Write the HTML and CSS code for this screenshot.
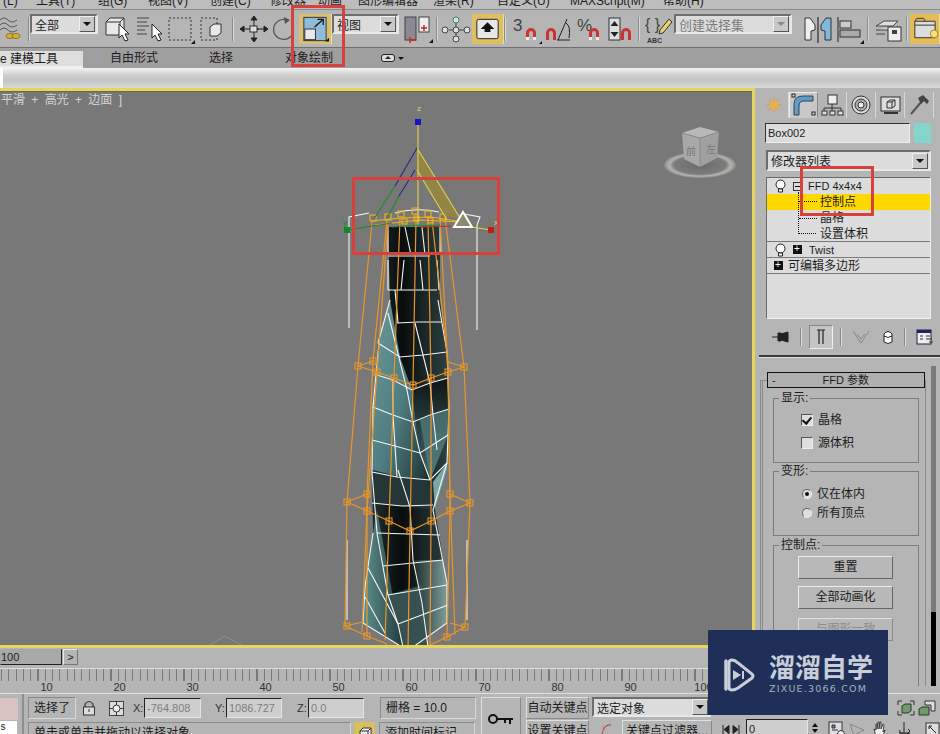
FILE: index.html
```html
<!DOCTYPE html>
<html lang="zh">
<head>
<meta charset="utf-8">
<title>3ds Max</title>
<link rel="stylesheet" href="styles.css">
</head>
<body>
<div class="app">
  <div class="menu">
    <span class="m1">(L)</span><span class="m2">工具(T)</span><span class="m3">组(G)</span><span class="m4">视图(V)</span><span class="m5">创建(C)</span><span class="m6">修改器</span><span class="m7">动画</span><span class="m8">图形编辑器</span><span class="m9">渲染(R)</span><span class="m10">自定义(U)</span><span class="m11">MAXScript(M)</span><span class="m12">帮助(H)</span>
  </div>

  <div class="toolbar">
    <svg class="ic" width="28" height="30" viewBox="0 0 28 30"><g fill="none" stroke="#555" stroke-width="1"><path d="M0 6q4-4 8 0t9 0"/><path d="M0 11q4-4 8 0t9 0"/><path d="M0 16q4-4 8 0t9 0"/></g><g fill="#d8b030" stroke="#7a5a10" stroke-width=".7"><ellipse cx="10" cy="22" rx="4" ry="2.5"/><ellipse cx="16" cy="22" rx="4" ry="2.5"/></g></svg>
    <i class="sep"></i>
    <div class="combo c-all"><span>全部</span><b class="arrow"></b></div>
    <svg class="ic" width="33" height="30" viewBox="0 0 33 30"><path d="M5 8l4-4h14v14l-4 3H5z" fill="#e8e8e8" stroke="#333"/><path d="M5 8h14v13M19 8l4-4" fill="none" stroke="#333"/><path d="M18 10v14l3-3 3 6 3-1-3-6h4z" fill="#fff" stroke="#222"/></svg>
    <svg class="ic" width="32" height="30" viewBox="0 0 32 30"><path d="M3 4h12M3 8h10M3 12h12M3 16h8M3 20h10" stroke="#444" fill="none"/><path d="M18 10v14l3-3 3 6 3-1-3-6h4z" fill="#fff" stroke="#222"/></svg>
    <svg class="ic" width="32" height="30" viewBox="0 0 32 30"><rect x="3" y="4" width="22" height="22" fill="none" stroke="#333" stroke-dasharray="2 2"/><path d="M25 30l4-4v4z" fill="#111"/></svg>
    <svg class="ic" width="31" height="30" viewBox="0 0 31 30"><rect x="3" y="4" width="16" height="22" fill="none" stroke="#333" stroke-dasharray="2 2"/><path d="M12 13l4-3h7v9l-4 3h-7z" fill="#e8e8e8" stroke="#333"/></svg>
    <i class="sep sep-c"></i>
    <svg class="ic" width="33" height="30" viewBox="0 0 33 30"><path d="M14 15h8v-0M14 6l3-4 3 4zM14 24l3 4 3-4zM7 12l-4 3 4 3zM27 12l4 3-4 3z" fill="#222" stroke="#222"/><rect x="13" y="12" width="7" height="6" fill="#ddd" stroke="#333"/><path d="M17 6v6M17 18v6M7 15h6M20 15h7" stroke="#222"/></svg>
    <svg class="ic" width="29" height="30" viewBox="0 0 29 30"><path d="M17 6a10 10 0 1 0 6 6" fill="none" stroke="#555" stroke-width="1.2"/><path d="M14 3l6 3-5 4z" fill="#555"/></svg>
    <div class="active-btn"><svg width="33" height="30" viewBox="0 0 33 30"><rect x="5" y="3" width="23" height="24" fill="#8fbcd8" stroke="#333"/><rect x="6" y="15" width="11" height="11" fill="#e8e8e8" stroke="#333"/><path d="M16 13l8-7M19 5h6v6" fill="none" stroke="#111" stroke-width="1.3"/><path d="M27 28l4-4v4z" fill="#111"/></svg></div>
    <div class="combo c-view"><span>视图</span><b class="arrow"></b></div>
    <svg class="ic" width="36" height="30" viewBox="0 0 36 30"><rect x="5" y="3" width="11" height="23" fill="#8a8a92" stroke="#444"/><rect x="19" y="3" width="10" height="15" fill="#eee" stroke="#444"/><path d="M10 26h6M10 23v6M21 14h6M24 11v6" stroke="#c22" stroke-width="1.4"/><path d="M29 29l4-4v4z" fill="#111"/></svg>
    <i class="sep"></i>
    <svg class="ic" width="33" height="30" viewBox="0 0 33 30"><path d="M10 16h16M17 8v14" stroke="#444"/><g fill="#ddd" stroke="#444"><circle cx="6" cy="16" r="3"/><circle cx="17" cy="16" r="3"/><circle cx="28" cy="16" r="3"/><circle cx="17" cy="6" r="3" stroke="#386"/><circle cx="17" cy="25" r="3"/></g></svg>
    <div class="active-btn small"><svg width="32" height="30" viewBox="0 0 32 30"><rect x="5" y="5" width="22" height="20" rx="2" fill="#e6e6e6" stroke="#222"/><path d="M16 8l7 7h-4v3h-6v-3H9z" fill="#111"/></svg></div>
    <i class="sep"></i>
    <svg class="ic" width="34" height="30" viewBox="0 0 34 30"><text x="3" y="17" class="ic-t">3</text><path d="M16 26v-7a5 5 0 0 1 10 0v7h-3v-7a2 2 0 0 0-4 0v7z" fill="#c33"/><path d="M16 26h3v-3h-3zM23 26h3v-3h-3z" fill="#eee"/><path d="M29 30l3-3v3z" fill="#111"/></svg>
    <svg class="ic" width="31" height="30" viewBox="0 0 31 30"><path d="M2 26v-7a5 5 0 0 1 10 0v7H9v-7a2 2 0 0 0-4 0v7z" fill="#c33"/><path d="M13 26h13M14 26L23 5M22 9q5 3 3 15" fill="none" stroke="#222"/></svg>
    <svg class="ic" width="32" height="30" viewBox="0 0 32 30"><text x="2" y="17" class="ic-t">%</text><path d="M14 26v-7a5 5 0 0 1 10 0v7h-3v-7a2 2 0 0 0-4 0v7z" fill="#c33"/><path d="M14 26h3v-3h-3zM21 26h3v-3h-3z" fill="#eee"/></svg>
    <svg class="ic" width="31" height="30" viewBox="0 0 31 30"><rect x="2" y="4" width="11" height="22" fill="#ddd" stroke="#333"/><path d="M7.500 7l4 5h-8zM3.500 18h8l-4 5z" fill="#222"/><path d="M14 26v-7a5 5 0 0 1 10 0v7h-3v-7a2 2 0 0 0-4 0v7z" fill="#c33"/></svg>
    <i class="sep"></i>
    <svg class="ic" width="30" height="30" viewBox="0 0 30 30"><text x="1" y="16" class="ic-b">{ }</text><path d="M16 16L25 5l3 3-9 11-4 1z" fill="#e8cf70" stroke="#333"/><text x="3" y="29" class="ic-abc">ABC</text></svg>
    <div class="combo c-set"><span>创建选择集</span><b class="arrow dim"></b></div>
    <svg class="ic" width="39" height="30" viewBox="0 0 39 30"><path d="M10 4h5l5 7v5l-4 1v9h-6z" fill="#eee" stroke="#333"/><path d="M23 3v26" stroke="#111"/><path d="M36 4h-5l-5 7v5l4 1v9h6z" fill="#7fb8dc" stroke="#333"/></svg>
    <svg class="ic" width="33" height="30" viewBox="0 0 33 30"><path d="M4 3v25" stroke="#222"/><rect x="6" y="7" width="11" height="7" fill="#ccc" stroke="#333"/><rect x="6" y="16" width="20" height="7" fill="#aaa" stroke="#333"/><path d="M26 30l4-4v4z" fill="#111"/></svg>
    <i class="sep"></i>
    <svg class="ic" width="33" height="30" viewBox="0 0 33 30"><path d="M3 12l8-5h14l-5 5zM3 16h17l5-4M3 20h9" fill="#ddd" stroke="#444"/><rect x="15" y="13" width="13" height="14" fill="#eee" stroke="#333"/><rect x="19" y="16" width="5" height="4" fill="#345"/></svg>
    <i class="sep"></i>
    <div class="active-btn last"><svg width="30" height="30" viewBox="0 0 30 30"><path d="M5 7h21v17H5z" fill="#ddd" stroke="#333"/><path d="M5 7l2-3h7l2 3M5 11h21" fill="none" stroke="#333"/><circle cx="25" cy="20" r="4" fill="#f4e080" stroke="#a80"/></svg></div>
  </div>

  <div class="tabs">
    <div class="tab on">e 建模工具</div>
    <div class="tab t2">自由形式</div>
    <div class="tab t3">选择</div>
    <div class="tab t4">对象绘制</div>
    <div class="tab-pop"><i class="pill"></i><i class="dn"></i></div>
  </div>
  <div class="ribbon"><i class="ribbon-end"></i></div>

  <div class="main">
    <div class="viewport">
      <div class="vp-label">平滑 + 高光 + 边面 ]</div>
      <svg class="scene" width="752" height="553" viewBox="0 92 752 553">
        <defs>
          <linearGradient id="teal" x1="0" y1="0" x2="1" y2="1"><stop offset="0" stop-color="#6c9a9a"/><stop offset=".55" stop-color="#4f7c80"/><stop offset="1" stop-color="#1e3234"/></linearGradient>
          <linearGradient id="teal2" x1="0" y1="0" x2="1" y2="0"><stop offset="0" stop-color="#5f9090"/><stop offset="1" stop-color="#243a3c"/></linearGradient>
          <linearGradient id="teal3" x1="0" y1="0" x2="1" y2="0"><stop offset="0" stop-color="#1c2a2a"/><stop offset="1" stop-color="#7d9e9c"/></linearGradient>
          <linearGradient id="tealv" x1="0" y1="0" x2="0" y2="1"><stop offset="0" stop-color="#0e1414"/><stop offset=".5" stop-color="#2a4244"/><stop offset="1" stop-color="#3f6264"/></linearGradient>
          <linearGradient id="dark" x1="0" y1="0" x2="1" y2="0"><stop offset="0" stop-color="#25383a"/><stop offset=".45" stop-color="#090c0c"/><stop offset="1" stop-color="#2d4244"/></linearGradient>
          <radialGradient id="ringg"><stop offset="0" stop-color="#6b6b6b"/><stop offset=".72" stop-color="#7c7c7c"/><stop offset=".85" stop-color="#b4b4b0"/><stop offset="1" stop-color="#8a8a88"/></radialGradient>
          <g id="cp"><rect x="-3" y="-3" width="6" height="6" fill="none" stroke="#e8962a" stroke-width="1.1"/><path d="M-1.500 0h3M0-1.500v3" stroke="#e8962a" stroke-width=".8"/></g>
        </defs>

        <path d="M205 648l20-12 22 12" fill="none" stroke="#8c8c8c"/>

        <!-- view cube -->
        <ellipse cx="700" cy="165" rx="36" ry="13" fill="url(#ringg)"/>
        <path d="M682 133l18-6 19 5-19 6z" fill="#b9b9b9"/>
        <path d="M682 133l18 5v29l-16-8z" fill="#a8a8a8"/>
        <path d="M700 138l19-6-2 26-17 9z" fill="#a0a0a0"/>
        <path d="M700 138v29M682 133l18 5 19-6" fill="none" stroke="#7e7e7e" stroke-width=".7"/>
        <text x="686" y="155" class="cube-t">前</text><text x="706" y="153" class="cube-t">左</text>

        <!-- tower -->
        <polygon points="388,227 440,227 440,300 447,352 449,409 447,470 435,510 447,583 447,623 413,647 403,647 363,623 365,587 373,533 372,470 373,407 378,343 390,300" fill="url(#dark)"/>
        <polygon points="378,343 390,300 400,357 412,390 420,453 428,482 400,477 372,470 373,407" fill="url(#teal)"/>
        <polygon points="412,390 430,383 448,378 449,409 448,435 430,480 420,453" fill="url(#tealv)"/>
        <polygon points="420,420 449,409 448,435 430,480" fill="#55807f" fill-opacity=".7"/>
        <polygon points="372,470 400,477 428,482 435,510 402,506 375,503" fill="#243638"/>
        <polygon points="433,482 447,463 447,470 435,510" fill="#7aa6a6"/>
        <polygon points="377,510 398,624 403,647 363,623 365,587 373,533" fill="url(#teal2)"/>
        <polygon points="413,560 443,560 447,583 447,623 413,647 422,603" fill="url(#teal3)"/>
        <polygon points="388,595 422,585 428,647 403,647" fill="#375052"/>

        <!-- white mesh -->
        <g fill="none" stroke="#f4f6f4" stroke-width="1.1">
          <path d="M388 227v28M440 227v28M388 256h42M405 227l6 28M422 227l3 28"/>
          <path d="M388 260v30M437 260l2 30M388 290h49M404 260l-3 30M420 260l3 30M395 290l3 33"/>
          <path d="M397 323l21-1 24 0M390 300l-12 43"/>
          <path d="M378 343l22 14 23-2 24-3"/>
          <path d="M377 375l16 5 19 10 18-7 18-5"/>
          <path d="M373 407l20 8 20 7 17-7 19-6"/>
          <path d="M372 440l23 6 25 7 28-18"/>
          <path d="M372 472l25 5 33 3 17-17"/>
          <path d="M372 503l30 3 31-1"/>
          <path d="M377 533l63 2"/>
          <path d="M383 566l60-6"/>
          <path d="M388 595l59-10"/>
          <path d="M398 624l50-19"/>
          <path d="M388 313l19 77 6 32 7 31 10 27"/>
          <path d="M415 323l8 32 7 28 3 32 4 35"/>
          <path d="M438 300l9 52 2 57-1 26-1 28-14 47 14 73v40l-34 24"/>
          <path d="M379 343l-3 32-3 32-1 65 5 61 11 62 10 29 5 23"/>
          <path d="M393 380v35l2 31 2 31"/>
          <path d="M398 470l12 37 3 53 9 43 6 44"/>
          <path d="M373 533l-8 54-2 36 39 24"/>
          <path d="M368 568l30 56M365 597l20 36"/>
          <path d="M349 225v103M477 225v105"/>
          <path d="M349 225v-8l20-4M477 225l3-8-16-3M395 213q22-6 44-1"/>
          <path d="M347 540v80M467 540v80"/>
        </g>

        <!-- lattice -->
        <g fill="none" stroke="#e8962a" stroke-width="1.2">
          <path d="M372 222l-14 144-11 136-2 124"/>
          <path d="M387 220l-14 141-6 133v142"/>
          <path d="M388 222l-11 150-10 139-5 121"/>
          <path d="M400 218l-6 160-5 143-4 119"/>
          <path d="M416 218l-3 167-3 146-2 117"/>
          <path d="M428 218l3 160v143l-1 124"/>
          <path d="M440 218l8 154 2 139-3 126"/>
          <path d="M445 218l19 149 6 136-5 124"/>
          <path d="M432 220l16 142 2 132 5 141"/>
          <path d="M358 366l19 6 17 6 19 7 18-7 17-6 16-5M358 366l15-5M464 367l-16-5"/>
          <path d="M347 502l20 9 22 10 21 10 21-10 19-10 20-8M347 502l20-8M470 503l-20-9"/>
          <path d="M345 626l22 10 20 8M465 627l-18 10-17 8M345 626l18-4M465 627l-15-4"/>
        </g>
        <g>
          <use href="#cp" x="358" y="366"/><use href="#cp" x="373" y="361"/><use href="#cp" x="377" y="372"/><use href="#cp" x="394" y="378"/><use href="#cp" x="413" y="385"/><use href="#cp" x="431" y="378"/><use href="#cp" x="448" y="372"/><use href="#cp" x="464" y="367"/>
          <use href="#cp" x="347" y="502"/><use href="#cp" x="367" y="494"/><use href="#cp" x="367" y="511"/><use href="#cp" x="389" y="521"/><use href="#cp" x="410" y="531"/><use href="#cp" x="431" y="521"/><use href="#cp" x="450" y="511"/><use href="#cp" x="450" y="494"/><use href="#cp" x="470" y="503"/>
          <use href="#cp" x="347" y="626"/><use href="#cp" x="367" y="636"/><use href="#cp" x="447" y="637"/><use href="#cp" x="465" y="627"/>
        </g>

        <!-- top cp cluster -->
        <g fill="none" stroke="#f0b020" stroke-width="1.1">
          <path d="M371 221l30-3 30-1 32 5M375 225l45-5 40 2"/>
          <rect x="370" y="215" width="6" height="6"/><rect x="385" y="214" width="6" height="6"/><rect x="398" y="211" width="6" height="6"/><rect x="412" y="208" width="6" height="6"/><rect x="425" y="211" width="6" height="6"/><rect x="440" y="214" width="6" height="6"/><rect x="402" y="219" width="5" height="5"/><rect x="414" y="216" width="5" height="5"/><rect x="428" y="218" width="5" height="5"/>
        </g>

        <!-- gizmo -->
        <polygon points="417,148 460,218 444,216 417,170" fill="#9a8a38" fill-opacity=".75"/>
        <g fill="none" stroke-width="1.1">
          <path d="M418 125v100M417 148l43 70M417 170l30 50" stroke="#e6d04a"/>
          <path d="M417 148l-22 38M415 170l-16 26" stroke="#232a8c"/>
          <path d="M395 186l-21 33M399 196l-12 22M347 230l45-7" stroke="#1f8a2a"/>
          <path d="M392 227l28-2M420 226l20-1" stroke="#1f8a2a"/>
          <path d="M421 227l30-1" stroke="#b03020"/>
          <path d="M465 226l26 4" stroke="#e6d04a"/>
        </g>
        <path d="M463 212l9 15h-18z" fill="#8a8a70" stroke="#fff" stroke-width="2"/>
        <rect x="415" y="119" width="6" height="6" fill="#1414c8"/>
        <rect x="344" y="227" width="6" height="6" fill="#108a20"/>
        <rect x="488" y="227" width="6" height="6" fill="#c02010"/>
        <text x="417" y="111" class="ax">z</text>
        <text x="343" y="225" class="ax g">y</text>
        <text x="494" y="225" class="ax">x</text>
      </svg>
    </div>

    <aside class="panel">
      <div class="cmd-tabs">
        <div class="cmd"><svg width="24" height="22" viewBox="0 0 24 22"><path d="M12 3v16M4 11h16M6 5l12 12M18 5L6 17" stroke="#e89a30"/><circle cx="12" cy="11" r="4" fill="#f0b040"/></svg></div>
        <div class="cmd on"><svg width="26" height="24" viewBox="0 0 26 24"><path d="M3 22V11q0-8 9-8h10v5H13q-5 0-5 5v9z" fill="#5f9cc8" stroke="#345"/><rect x="1" y="1" width="3" height="3" fill="#ddd" stroke="#222"/><rect x="21" y="19" width="3" height="3" fill="#ddd" stroke="#222"/></svg></div>
        <div class="cmd"><svg width="24" height="24" viewBox="0 0 24 24"><rect x="8" y="2" width="9" height="9" fill="#eee" stroke="#333"/><path d="M12 11v4M4 15h17M4 15v3M12 15v3M21 15v3" stroke="#333" fill="none"/><rect x="2" y="18" width="5" height="4" fill="#ddd" stroke="#333"/><rect x="10" y="18" width="5" height="4" fill="#ddd" stroke="#333"/><rect x="18" y="18" width="5" height="4" fill="#ddd" stroke="#333"/></svg></div>
        <div class="cmd"><svg width="24" height="22" viewBox="0 0 24 22"><circle cx="12" cy="11" r="9" fill="#ddd" stroke="#333"/><circle cx="12" cy="11" r="6" fill="#aaa" stroke="#333"/><circle cx="12" cy="11" r="3" fill="#eee" stroke="#333"/></svg></div>
        <div class="cmd"><svg width="24" height="22" viewBox="0 0 24 22"><rect x="3" y="3" width="19" height="14" fill="#ddd" stroke="#333"/><path d="M9 8l3-2h5v6l-3 2H9zM9 8h5v6M14 8l3-2" fill="none" stroke="#333"/><path d="M6 19h14" stroke="#333" stroke-width="2"/></svg></div>
        <div class="cmd"><svg width="24" height="24" viewBox="0 0 24 24"><path d="M4 21L15 8" stroke="#555" stroke-width="2"/><path d="M11 5l5-3 6 6-2 3-3-3-3 3z" fill="#444"/></svg></div>
      </div>
      <div class="name-row"><div class="name-in">Box002</div><div class="swatch"></div></div>
      <div class="combo c-mod"><span>修改器列表</span><b class="arrow"></b></div>
      <div class="stack">
        <div class="row r-top"><svg class="bulb" width="13" height="14" viewBox="0 0 13 14"><circle cx="6.500" cy="5.500" r="4.500" fill="#fff" stroke="#222"/><path d="M4.500 10h4v3h-4z" fill="#fff" stroke="#222"/></svg><i class="box-m"></i><span class="lbl-ffd">FFD 4x4x4</span></div>
        <div class="row sel"><span class="sub">控制点</span></div>
        <div class="row"><span class="sub">晶格</span></div>
        <div class="row r-end"><span class="sub">设置体积</span></div>
        <div class="row r-end"><svg class="bulb" width="13" height="14" viewBox="0 0 13 14"><circle cx="6.500" cy="5.500" r="4.500" fill="#fff" stroke="#222"/><path d="M4.500 10h4v3h-4z" fill="#fff" stroke="#222"/></svg><i class="box-p"></i><span class="lbl-tw">Twist</span></div>
        <div class="row r-end"><i class="box-p first"></i><span class="lbl-ed">可编辑多边形</span></div>
        <i class="tree"></i>
      </div>
      <div class="stack-tools">
        <svg width="18" height="14" viewBox="0 0 18 14"><path d="M0 7h6M6 3h3v8H6zM9 4l7-2v10l-7-2z" fill="#222" stroke="#222"/></svg>
        <i class="v"></i>
        <div class="pressed"><svg width="10" height="18" viewBox="0 0 10 18"><path d="M1 2h8M3 2v14M7 2v14" stroke="#222" fill="none" stroke-width="1.200"/></svg></div>
        <i class="v"></i>
        <svg width="18" height="16" viewBox="0 0 18 16"><path d="M1 2l8 12 8-12M5 5l4 5 4-5" fill="none" stroke="#888"/></svg>
        <svg width="12" height="16" viewBox="0 0 12 16"><path d="M2 5q4-5 8 0v8q-4 3-8 0z" fill="#fff" stroke="#222"/><path d="M2 7q4 3 8 0" fill="none" stroke="#222"/></svg>
        <i class="v"></i>
        <svg width="18" height="16" viewBox="0 0 18 16"><rect x="1" y="1" width="14" height="14" fill="#eee" stroke="#224"/><rect x="1" y="1" width="14" height="3" fill="#226"/><path d="M4 7h3M4 10h3M10 7h4M10 10h6M13 13h4" stroke="#333"/></svg>
      </div>
      <div class="divider"></div>
      <div class="rollouts">
        <div class="scrollbar"></div>
        <div class="roll-box">
          <div class="roll-head"><span>-</span><span class="rt">FFD 参数</span></div>
          <fieldset class="grp g1"><legend>显示:</legend>
            <label class="opt o1"><i class="chk on"></i>晶格</label>
            <label class="opt o2"><i class="chk"></i>源体积</label>
          </fieldset>
          <fieldset class="grp g2"><legend>变形:</legend>
            <label class="opt o3"><i class="rad on"></i>仅在体内</label>
            <label class="opt o4"><i class="rad"></i>所有顶点</label>
          </fieldset>
          <fieldset class="grp g3"><legend>控制点:</legend>
            <div class="btn">重置</div>
            <div class="btn">全部动画化</div>
            <div class="btn dis">与图形一致</div>
          </fieldset>
        </div>
      </div>
    </aside>
  </div>

  <div class="slider"><div class="sl-box">100</div><div class="sl-next">&gt;</div></div>
  <div class="ruler">
    <div class="ticks"></div>
    <div class="nums"><span>10</span><span>20</span><span>30</span><span>40</span><span>50</span><span>60</span><span>70</span><span>80</span><span>90</span><span>100</span></div>
  </div>

  <div class="status">
    <div class="st-left"><div class="pink"></div><div class="white">s (</div></div>
    <div class="st-mid">
      <div class="st-row">
        <div class="flat sel-box">选择了</div>
        <svg class="lock" width="14" height="16" viewBox="0 0 14 16"><path d="M3 7V4q4-5 8 0v3" fill="none" stroke="#333" stroke-width="1.200"/><rect x="1.500" y="7" width="11" height="8" fill="#ddd" stroke="#333"/><path d="M7 9v3" stroke="#333"/></svg>
        <svg class="abs" width="15" height="15" viewBox="0 0 15 15"><rect x=".5" y=".5" width="14" height="14" fill="#ddd" stroke="#444"/><circle cx="7.500" cy="7.500" r="3.500" fill="#eee" stroke="#333"/><path d="M7.500 0v4M7.500 11v4M0 7.500h4M11 7.500h4" stroke="#333"/></svg>
        <span class="xl x">X:</span><div class="sunk w56">-764.808</div>
        <span class="xl y">Y:</span><div class="sunk w55">1086.727</div>
        <span class="xl z">Z:</span><div class="sunk w55">0.0</div>
        <div class="flat grid-box">栅格 = 10.0</div>
      </div>
      <div class="st-row r2">
        <div class="flat prompt">单击或单击并拖动以选择对象</div>
        <div class="iso"><svg width="14" height="14" viewBox="0 0 14 14"><path d="M2 5l3-3h8v8l-3 3H2z" fill="#eee" stroke="#333"/><path d="M2 5h8v8M10 5l3-3" fill="none" stroke="#333"/></svg></div>
        <div class="flat time-tag">添加时间标记</div>
      </div>
    </div>
    <div class="key"><svg width="26" height="12" viewBox="0 0 26 12"><circle cx="5" cy="6" r="4" fill="none" stroke="#111" stroke-width="2"/><path d="M9 5h16v2h-2v4h-2V7h-3v3h-2V7H9z" fill="#111"/></svg></div>
    <div class="st-keys">
      <div class="k-row"><div class="k-btn">自动关键点</div><div class="combo c-sel"><span>选定对象</span><b class="arrow"></b></div></div>
      <div class="k-row r2"><div class="k-btn">设置关键点</div><svg class="curve" width="18" height="15" viewBox="0 0 18 15"><path d="M2 14q4 0 6-7t8-6" fill="none" stroke="#a33"/><path d="M8 1v13" stroke="#c88"/></svg><div class="k-filter">关键点过滤器...</div></div>
    </div>
    <div class="st-right">
      <div class="rt-top">
        <svg width="18" height="16" viewBox="0 0 18 16"><path d="M1 5V1h4M13 1h4v4M1 11v4h4M13 15h4v-4" fill="none" stroke="#333"/><path d="M5 6l3-2h6v7l-3 2H5z" fill="#6f9a6a" stroke="#333"/></svg>
        <svg width="18" height="18" viewBox="0 0 18 18"><path d="M7 1h10v10h-4V5H7z" fill="#ddd" stroke="#333"/><path d="M1 9l3-2h7v8H1z" fill="#6f9a6a" stroke="#333"/></svg>
      </div>
      <div class="rt-bot">
        <svg width="18" height="9" viewBox="0 0 18 9"><path d="M1 0v9M17 0v9M2 4.500l5-4v8zM16 4.500l-5-4v8z" fill="#222" stroke="#222"/></svg>
        <div class="sunk frame">0</div>
        <div class="spin"><i></i><i class="d"></i></div>
        <svg width="17" height="17" viewBox="0 0 17 17"><rect x="1" y="1" width="13" height="13" fill="#ddd" stroke="#334"/><path d="M4 4h3v3H4zM4 9h6" fill="#58a" stroke="#334"/><circle cx="13" cy="13" r="3.500" fill="#eee" stroke="#333"/></svg>
        <svg class="tri" width="16" height="14" viewBox="0 0 16 14"><path d="M1 2l14 6-10 5z" fill="none" stroke="#888"/></svg>
        <svg width="15" height="16" viewBox="0 0 15 16"><path d="M3 15L1 8l2 1V3l1 0v5l1-7h1v7l1-7h1l0 7 2-5 1 1-1 7 2-2-2 6z" fill="#eee" stroke="#222" stroke-width=".8"/></svg>
        <svg class="orb" width="15" height="16" viewBox="0 0 15 16"><path d="M7 1v11M2 12h11" stroke="#222" fill="none"/><path d="M3 9a5 3 0 1 0 8-1" fill="none" stroke="#222"/></svg>
        <svg class="maxi" width="15" height="15" viewBox="0 0 15 15"><rect x="1" y="1" width="13" height="13" fill="#ddd" stroke="#333"/><path d="M4 4l7 7M7 4H4v3" fill="none" stroke="#222"/></svg>
      </div>
    </div>
  </div>

  <div class="mark m-a"></div>
  <div class="mark m-b"></div>
  <div class="mark m-c"></div>

  <div class="wm">
    <svg class="wm-logo" width="38" height="36" viewBox="0 0 38 36"><path d="M8 4v28" stroke="#c9ced8" stroke-width="3.500" fill="none" stroke-linecap="round"/><path d="M14 3q-3 0-3 3v24q0 3 3 3 3 0 6-2l14-10q2-2 0-4L20 6q-3-3-6-3z" fill="none" stroke="#c9ced8" stroke-width="3"/><path d="M15 13l8 5-8 5z" fill="#c9ced8"/><path d="M25 14v8" stroke="#c9ced8" stroke-width="2"/></svg>
    <div class="wm-text"><div class="wm-cn">溜溜自学</div><div class="wm-en">ZIXUE.3066.COM</div></div>
  </div>
</div>
</body>
</html>
```
FILE: styles.css
```css
* { box-sizing: border-box; }
html, body { margin: 0; padding: 0; height: 100%; overflow: hidden; background: #b4b4b4; }
body { font: 12px "Liberation Sans", "Noto Sans CJK SC", sans-serif; color: #1c1c1c; }
i { display: block; font-style: normal; }
.app { position: relative; width: 940px; height: 734px; overflow: hidden; display: grid; grid-template-rows: 10px 38px 20px 20px 560px 20px 25px 41px; }

/* menu */
.menu { display: grid; grid-template-columns: 36px 62px 50px 62px 60px 48px 40px 75px 64px 73px 93px 77px; background: #bdbdbd; overflow: hidden; font-size: 12px; line-height: 14px; border-bottom: 1px solid #8a8a8a; }
.menu span { margin-top: -6px; white-space: nowrap; }
.menu .m1 { padding-left: 3px; }

/* toolbar */
.toolbar { display: grid; grid-template-columns: 28px 2px 71px 33px 32px 32px 31px 8px 33px 29px 33px 68px 36px 3px 33px 32px 6px 34px 31px 32px 31px 6px 30px 121px 39px 33px 6px 33px 4px 30px; align-items: center; background: #b5b5b5; border-bottom: 1px solid #6e6e6e; }
.toolbar .sep { width: 1px; height: 24px; background: #8a8a8a; border-right: 1px solid #d8d8d8; box-sizing: content-box; }
.toolbar .sep-c { margin-left: 3px; }
.toolbar .combo { align-self: start; margin-top: 4px; }
.ic-t { font: 17px "Liberation Sans", sans-serif; fill: #444; }
.ic-b { font: 16px "Liberation Sans", sans-serif; fill: #444; }
.ic-abc { font: bold 7px "Liberation Sans", sans-serif; fill: #333; }
.active-btn { height: 30px; width: 100%; background: #d8c070; display: flex; align-items: center; justify-content: center; border-right: 1px solid #e8e0a0; }
.active-btn.small { background: #e0bf60; }
.active-btn.last { background: #e6bb55; }

.combo { display: flex; align-items: center; justify-content: space-between; height: 20px; background: #dcdcdc; border: 2px solid; border-color: #6e6e6e #e8e8e8 #e8e8e8 #6e6e6e; padding: 0 1px 0 3px; font-size: 12px; overflow: hidden; white-space: nowrap; }
.arrow { width: 16px; height: 16px; background: #c8c8c8; border: 1px solid; border-color: #f0f0f0 #555 #555 #f0f0f0; position: relative; flex: none; }
.arrow::after { content: ""; position: absolute; left: 3px; top: 5px; border: 4px solid transparent; border-top: 4px solid #111; border-bottom: 0; }
.arrow.dim::after { border-top-color: #8a8a8a; }
.c-all { width: 68px; }
.c-view { width: 67px; }
.c-set { width: 118px; color: #7c7c7c; font-size: 13px; }
.c-mod { width: 165px; height: 21px; margin: 7px 0 0 11px; }
.c-sel { width: 120px; height: 20px; }

/* tabs */
.tabs { display: flex; background: #9f9f9f; font-size: 12px; line-height: 20px; }
.tab { height: 20px; white-space: nowrap; }
.tab.on { width: 83px; margin-top: 3px; line-height: 14px; padding-top: 1px; background: #dedede; border-bottom: 2px solid #f0f0f0; height: 17px; }
.t2 { margin-left: 27px; width: 99px; }
.t3 { margin-left: 0; width: 76px; }
.t4 { width: 96px; }
.tab-pop { display: flex; align-items: center; gap: 3px; margin-left: 0; }
.pill { position: relative; width: 14px; height: 8px; border: 1px solid #222; border-radius: 3px; background: #ddd; }
.pill::after { content: ""; position: absolute; left: 3px; top: 1px; border: 3px solid transparent; border-bottom: 3px solid #222; border-top: 0; }
.dn { border: 3px solid transparent; border-top: 3px solid #111; border-bottom: 0; }
.ribbon { background: linear-gradient(#f4f4f4, #cfcfcf 35%, #c4c4c4 60%, #d8d8d8); display: block; }
.ribbon-end { width: 3px; height: 20px; background: #fff; }

/* main */
.main { display: flex; height: 560px; }
.viewport { position: relative; width: 755px; height: 560px; background: #787878; border: solid #e6d65c; border-width: 3px 3px 3px 0; box-shadow: inset 0 1px 0 #6a6a50; overflow: hidden; }
.scene { display: block; margin-top: 1px; }
.vp-label { position: absolute; left: 1px; top: 2px; color: #d4d4d4; font-size: 12px; line-height: 14px; word-spacing: 3px; white-space: nowrap; }
.ax { font: 8px "Liberation Sans", sans-serif; fill: #e6d04a; }
.ax.g { fill: #108a20; }
.cube-t { font: 10px "Noto Sans CJK SC", sans-serif; fill: #7a7a7a; }

/* panel */
.panel { position: relative; z-index: 1; width: 185px; height: 598px; overflow: hidden; background: #b5b5b5; }
.cmd-tabs { display: flex; padding: 4px 0 0 5px; height: 30px; }
.cmd { width: 29px; height: 26px; display: flex; align-items: center; justify-content: center; border-right: 1px solid #d8d8d8; }
.cmd.on { background: #c8c8c8; border: 1px solid; border-color: #ededed #8a8a8a transparent #ededed; }
.name-row { display: flex; gap: 4px; margin: 5px 0 0 10px; }
.name-in { width: 145px; height: 20px; background: #dcdcdc; border: 1px solid; border-color: #333 #eee #eee #333; font-size: 11px; line-height: 18px; padding-left: 2px; }
.swatch { width: 17px; height: 20px; background: #84d6cc; }
.stack { position: relative; width: 165px; height: 142px; margin: 6px 0 0 11px; background: #dcdcdc; border: 1px solid; border-color: #6a6a6a #f0f0f0 #f0f0f0 #6a6a6a; font-size: 12px; }
.row { height: 16px; display: flex; align-items: center; line-height: 16px; white-space: nowrap; }
.row.r-end { border-bottom: 1px solid #7a7a7a; }
.row.sel { background: #ffd800; }
.bulb { margin-left: 7px; flex: none; }
.box-m { width: 9px; height: 9px; margin-left: 6px; border: 1px solid #333; position: relative; background: #dcdcdc; }
.box-m::after { content: ""; position: absolute; left: 1px; top: 3px; width: 5px; height: 1px; background: #111; }
.box-p { width: 9px; height: 9px; margin-left: 6px; background: #111; position: relative; flex: none; }
.box-p::after { content: "+"; position: absolute; left: 1px; top: -4px; color: #fff; font-size: 10px; line-height: 16px; }
.box-p.first { margin-left: 7px; }
.lbl-ffd { margin-left: 6px; font-size: 11px; }
.lbl-tw { margin-left: 7px; font-size: 11px; }
.lbl-ed { margin-left: 5px; }
.sub { margin-left: 53px; }
.tree { position: absolute; left: 31px; top: 14px; width: 18px; height: 42px; border-left: 1px dotted #111; border-bottom: 1px dotted #111; }
.tree::before { content: ""; position: absolute; left: 0; top: 9px; width: 18px; height: 16px; border-top: 1px dotted #111; border-bottom: 1px dotted #111; }
.stack-tools { display: flex; align-items: center; gap: 12px; margin: 6px 0 0 17px; height: 24px; }
.stack-tools .v { width: 1px; height: 18px; background: #8a8a8a; border-right: 1px solid #ddd; box-sizing: content-box; margin: 0 -2px; }
.pressed { width: 24px; height: 24px; display: flex; align-items: center; justify-content: center; background: #c4c4c4; border: 1px solid; border-color: #888 #eee #eee #888; margin: 0 -3px; }
.divider { height: 3px; margin-top: 6px; background: #3a3a3a; border-bottom: 1px solid #ddd; margin-left: 4px; }
.rollouts { position: relative; height: 340px; padding: 11px 0 0 5px; }
.scrollbar { position: absolute; left: 176px; top: 8px; width: 5px; height: 322px; background: linear-gradient(#7a7a7a 0 246px, #000 246px); }
.roll-box { position: relative; width: 166px; height: 320px; border: 1px solid #8a8a8a; border-bottom: 0; margin-top: 11px; box-shadow: inset 1px 0 #b5b5b5, inset 2px 0 #8a8a8a; }
.roll-head { position: absolute; left: 6px; top: -9px; width: 158px; height: 16px; display: flex; align-items: center; background: #b0b0b0; border: 1px solid #111; padding-left: 4px; font-size: 11px; line-height: 14px; }
.roll-head .rt { flex: 1; text-align: center; padding-right: 8px; }
.grp { position: absolute; left: 12px; width: 146px; margin: 0; padding: 0; border: 1px solid #7c7c7c; font-size: 12px; }
.grp legend { margin-left: 5px; padding: 0 2px; line-height: 14px; height: 14px; }
.g1 { top: 10px; height: 72px; }
.g2 { top: 83px; height: 72px; }
.g3 { top: 157px; height: 160px; }
.opt { position: absolute; left: 27px; display: flex; align-items: center; gap: 5px; line-height: 16px; white-space: nowrap; }
.o1 { top: 7px; } .o2 { top: 30px; } .o3 { top: 8px; } .o4 { top: 27px; }
.chk { width: 12px; height: 12px; background: #dedede; border: 1px solid; border-color: #555 #eee #eee #555; position: relative; }
.chk.on::after { content: ""; position: absolute; left: 2px; top: 0; width: 4px; height: 7px; border: solid #111; border-width: 0 2px 2px 0; transform: rotate(40deg); }
.rad { width: 10px; height: 10px; margin-left: 1px; border-radius: 50%; background: #dedede; border: 1px solid; border-color: #666 #eee #eee #666; position: relative; }
.rad.on::after { content: ""; position: absolute; left: 2px; top: 2px; width: 4px; height: 4px; border-radius: 50%; background: #111; }
.btn { width: 95px; height: 23px; margin: 0 0 7px 24px; text-align: center; line-height: 21px; background: #b8b8b8; border: 1px solid; border-color: #ececec #666 #666 #ececec; }
.btn:first-of-type { margin-top: 4px; }
.btn.dis { margin-top: 9px; color: #8c8c8c; border-color: #e0e0e0 #8a8a8a #8a8a8a #e0e0e0; }

/* slider, ruler */
.slider { display: flex; height: 20px; background: #b5b5b5; padding-top: 1px; }
.sl-box { width: 62px; height: 16px; background: #a8a8a8; border: 1px solid; border-color: #a8a8a8 #222 #222 #a8a8a8; font-size: 11px; line-height: 14px; }
.sl-next { width: 15px; height: 16px; margin-left: 1px; text-align: center; line-height: 14px; font-size: 11px; border: 1px solid; border-color: #e6e6e6 #777 #777 #e6e6e6; }
.ruler { background: #b5b5b5; border-top: 1px solid #dedede; }
.ticks { height: 12px; background: repeating-linear-gradient(90deg, #7a7a7a 0 1px, transparent 1px 7.3px) 1px 0; }
.nums { display: flex; padding-left: 10px; font-size: 11px; line-height: 12px; color: #333; }
.nums span { width: 73px; text-align: center; }

/* status */
.status { display: flex; background: #b5b5b5; height: 41px; border-top: 1px solid #dedede; padding-top: 3px; }
.st-left { width: 24px; border-right: 2px solid #8e8e8e; margin-top: -3px; padding-top: 4px; }
.pink { width: 18px; height: 22px; background: #d8c2c2; }
.white { width: 17px; height: 16px; background: #fff; font: 10px/14px "Liberation Mono", monospace; margin-top: 1px; }
.st-mid { width: 448px; margin-left: 4px; }
.st-row { display: flex; align-items: center; height: 22px; white-space: nowrap; }
.st-row.r2 { margin-top: 3px; }
.flat { height: 22px; background: #b5b5b5; border: 1px solid; border-color: #8a8a8a #d8d8d8 #d8d8d8 #8a8a8a; line-height: 20px; padding-left: 5px; }
.sel-box { width: 48px; }
.lock { margin-left: 6px; }
.abs { margin-left: 13px; }
.xl { flex: none; width: 11px; font-size: 11px; color: #333; }
.xl.x { margin-left: 9px; }
.xl.y { margin-left: 14px; }
.xl.z { margin-left: 15px; }
.sunk { height: 20px; background: #cecece; border: 1px solid; border-color: #222 #e4e4e4 #e4e4e4 #222; color: #7e7e7e; font-size: 11px; line-height: 18px; padding-left: 2px; }
.w56 { width: 57px; }
.w55 { width: 56px; }
.grid-box { width: 96px; margin-left: 16px; font-size: 12px; }
.prompt { width: 323px; }
.iso { width: 21px; height: 22px; margin-left: 3px; background: #d8bf60; display: flex; align-items: center; justify-content: center; }
.time-tag { width: 96px; margin-left: 4px; }
.key { width: 40px; height: 44px; margin: 0 5px 0 5px; display: flex; align-items: center; justify-content: center; border: 1px solid; border-color: #dedede #888 #888 #dedede; }
.st-keys { width: 185px; }
.k-row { display: flex; gap: 3px; height: 22px; white-space: nowrap; }
.k-row.r2 { margin-top: 1px; align-items: flex-start; }
.k-btn { width: 63px; height: 22px; text-align: center; line-height: 20px; border: 1px solid; border-color: #e0e0e0 #888 #888 #e0e0e0; flex: none; }
.curve { margin: 4px 0 0 3px; flex: none; }
.k-filter { width: 90px; height: 22px; margin-left: 6px; text-align: center; line-height: 20px; border: 1px solid; border-color: #e0e0e0 #888 #888 #e0e0e0; flex: none; }
.st-right { flex: 1; }
.rt-top { display: flex; justify-content: flex-end; gap: 3px; height: 23px; padding: 3px 4px 0 0; }
.rt-bot { display: flex; align-items: center; gap: 4px; padding-left: 11px; height: 18px; }
.frame { width: 62px; margin-left: 2px; color: #222; height: 20px; flex: none; }
.spin { flex: none; width: 8px; height: 16px; display: flex; flex-direction: column; gap: 2px; padding-top: 2px; margin-right: 4px; }
.spin i { border: 3px solid transparent; border-bottom: 4px solid #111; border-top: 0; width: 0; }
.spin i.d { border-top: 4px solid #111; border-bottom: 0; }
.rt-bot svg { flex: none; }
.tri { margin-right: 4px; }
.orb { margin-left: 5px; }
.maxi { margin-left: 9px; }

/* annotation */
.mark { position: absolute; z-index: 2; border: 3px solid #d8403c; }
.m-a { left: 291px; top: 5px; width: 54px; height: 62px; }
.m-b { left: 352px; top: 177px; width: 148px; height: 78px; }
.m-c { left: 800px; top: 166px; width: 74px; height: 50px; }

/* watermark */
.wm { position: absolute; z-index: 2; left: 708px; top: 630px; width: 180px; height: 85px; background: #1f2f57; display: flex; align-items: center; padding: 5px 0 0 10px; gap: 13px; color: #c9ced8; }
.wm-text { display: flex; flex-direction: column; }
.wm-cn { font: 700 26px/30px "Noto Sans CJK SC", sans-serif; white-space: nowrap; margin-top: -4px; }
.wm-en { font: 9.500px/12px "DejaVu Sans", sans-serif; letter-spacing: 1.2px; color: #a9b0c2; white-space: nowrap; margin-top: 2px; }
```
